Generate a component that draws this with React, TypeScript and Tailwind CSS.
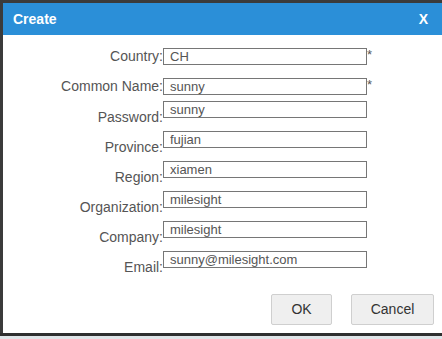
import React from "react";

const font = { fontFamily: '"Liberation Sans", Arial, sans-serif' };

function Row({
  label,
  value,
  star,
  centered,
  h,
}: {
  label: string;
  value: string;
  star?: boolean;
  centered?: boolean;
  h: string;
}) {
  return (
    <div className={`flex ${h} items-start`}>
      <div
        className={`w-[160px] text-right text-[14px] text-[#555] leading-[17px] ${
          centered ? "" : "mt-[8px]"
        }`}
      >
        {label}:
      </div>
      <input
        readOnly
        value={value}
        className="w-[204px] h-[17px] border border-[#767676] px-[6px] py-0 text-[13px] leading-[15px] text-[#555] outline-none bg-white"
        style={font}
      />
      {star && (
        <span className="text-[13px] leading-[13px] text-[#555]">*</span>
      )}
    </div>
  );
}

export default function App() {
  return (
    <div
      className="w-[442px] h-[339px] bg-[#3b3b3b] flex flex-col overflow-hidden"
      style={font}
    >
      <div className="pl-[3px] pt-[3px]">
        <div className="w-[439px] h-[330px] bg-white flex flex-col">
          <div className="h-[32px] bg-[#2b8fd8] flex items-center justify-between pl-[10px] pr-[14px] text-white font-bold text-[14px]">
            <span>Create</span>
            <span>X</span>
          </div>
          <div className="pt-[13px] flex flex-col">
            <Row label="Country" value="CH" star centered h="h-[30px]" />
            <Row label="Common Name" value="sunny" star centered h="h-[23px]" />
            <Row label="Password" value="sunny" h="h-[30px]" />
            <Row label="Province" value="fujian" h="h-[30px]" />
            <Row label="Region" value="xiamen" h="h-[30px]" />
            <Row label="Organization" value="milesight" h="h-[30px]" />
            <Row label="Company" value="milesight" h="h-[30px]" />
            <Row label="Email" value="sunny@milesight.com" h="h-[30px]" />
          </div>
          <div className="mt-[13px] flex justify-end gap-[19px] pr-[8px]">
            <button className="w-[61px] h-[31px] bg-[#efefef] border border-[#cfcfcf] rounded-[2px] text-[14px] text-[#333]">
              OK
            </button>
            <button className="w-[83px] h-[31px] bg-[#efefef] border border-[#cfcfcf] rounded-[2px] text-[14px] text-[#333]">
              Cancel
            </button>
          </div>
        </div>
      </div>
      <div className="h-[3px] bg-[#2f2f2f]" />
      <div className="flex-1 bg-[#dfe5e8]" />
    </div>
  );
}
